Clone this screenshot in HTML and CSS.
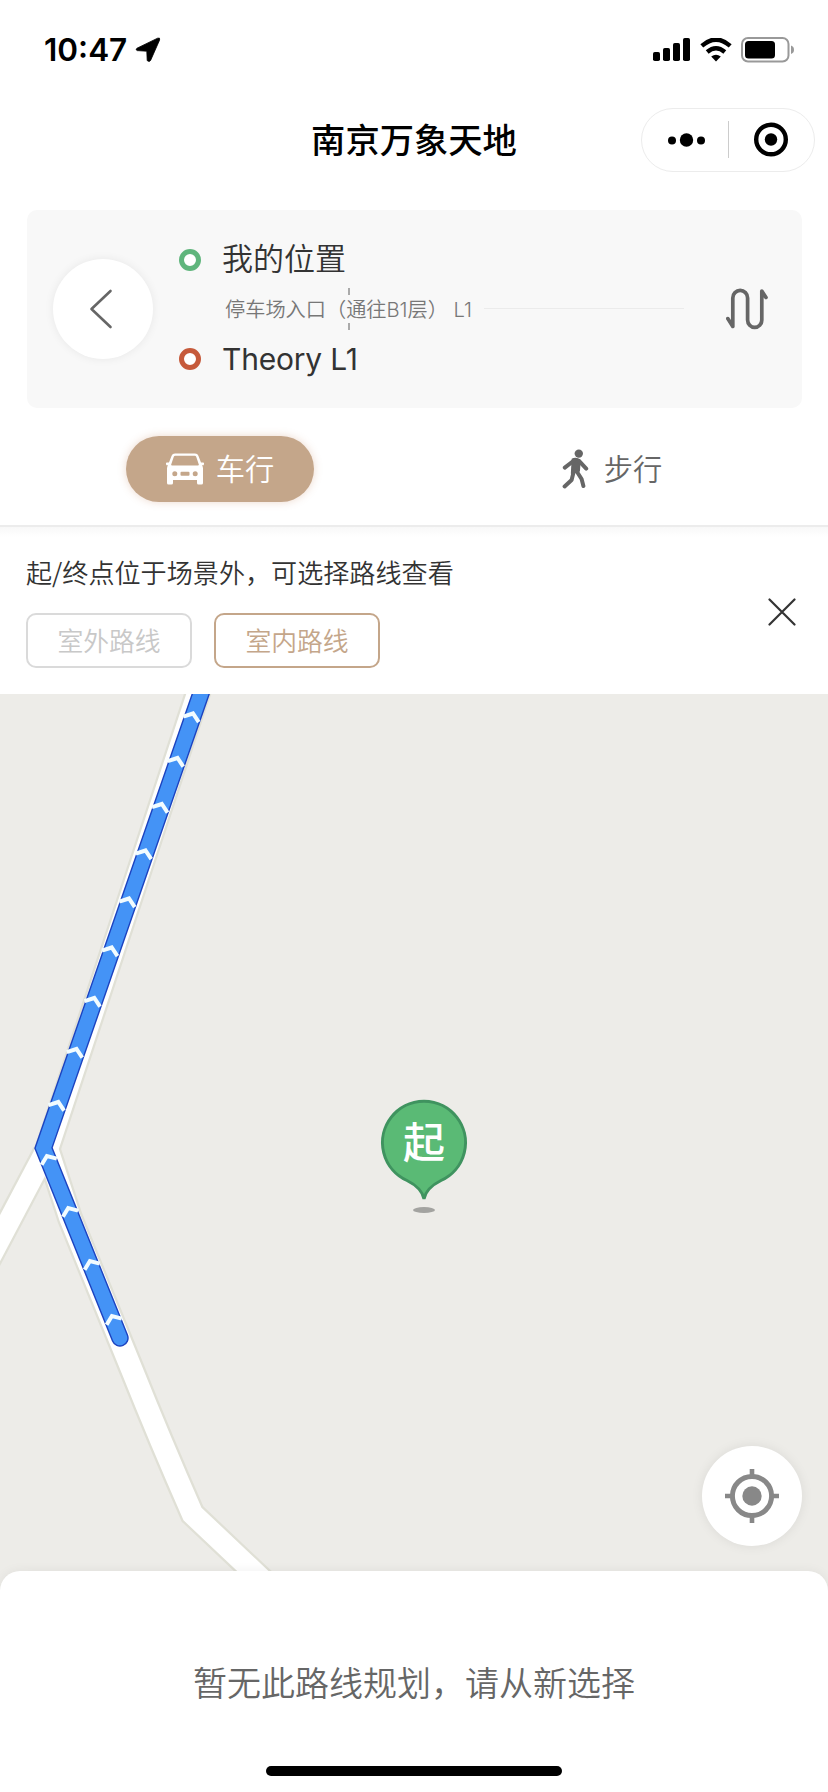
FILE: index.html
```html
<!DOCTYPE html>
<html lang="zh-CN">
<head>
    <meta charset="UTF-8">
    <meta name="viewport" content="width=device-width, initial-scale=1.0">
    <title>南京万象天地</title>
    <link rel="stylesheet" href="styles.css">
</head>
<body>
    <div class="page">
        <div class="status-bar">
            <div class="status-left">
                <span class="time">10:47</span>
                <svg class="location-arrow" width="26" height="26" viewBox="0 0 26 26">
                    <path d="M2 11.2 L22.6 1.2 Q25.4 0.2 24.6 3 L15.6 23.4 Q14.4 25.4 12.2 23.6 L11.8 14.2 L2.2 13.6 Q0 12.6 2 11.2Z" fill="#000" stroke="#000" stroke-width="0.8"/>
                </svg>
            </div>
            <div class="status-right">
                <svg width="38" height="24" viewBox="0 0 38 24">
                    <rect x="0" y="14" width="7" height="9" rx="1.8"/>
                    <rect x="10" y="10" width="7" height="13" rx="1.8"/>
                    <rect x="20" y="5" width="7" height="18" rx="1.8"/>
                    <rect x="30" y="0" width="7" height="23" rx="1.8"/>
                </svg>
                <svg width="32" height="24" viewBox="0 0 32 24">
                    <path d="M1.8 7.8 Q16 -4.6 30.2 7.8" fill="none" stroke="#000" stroke-width="4.4"/>
                    <path d="M7.2 14 Q16 6.6 24.8 14" fill="none" stroke="#000" stroke-width="4.4"/>
                    <path d="M11.2 18.6 Q16 15 20.8 18.6 L16 23.4Z"/>
                </svg>
                <svg class="battery" width="54" height="26" viewBox="0 0 54 26">
                    <rect x="1" y="1" width="46.5" height="23.5" rx="6" fill="none" stroke="#999" stroke-width="2"/>
                    <rect x="4" y="4" width="30" height="17.5" rx="3.5"/>
                    <path d="M50 8.6 Q53 9.6 53 12.8 Q53 16 50 17Z" fill="#999"/>
                </svg>
            </div>
        </div>

        <div class="nav-bar">
            <h1>南京万象天地</h1>
            <div class="capsule">
                <svg width="172" height="62" viewBox="0 0 172 62">
                    <circle cx="30" cy="31.5" r="4"/>
                    <circle cx="44.5" cy="31" r="6.7"/>
                    <circle cx="59" cy="31.5" r="4"/>
                    <path d="M86.5 12 V49" stroke="#ccc" stroke-width="1"/>
                    <circle cx="129" cy="30.5" r="14.8" fill="none" stroke="#000" stroke-width="4.4"/>
                    <circle cx="129" cy="30.5" r="6.2"/>
                </svg>
            </div>
        </div>

        <div class="route-card">
            <button class="back">
                <svg width="24" height="40" viewBox="0 0 24 40">
                    <path d="M21.5 2 L2.5 20 L21.5 38" fill="none" stroke="#666" stroke-width="2.6" stroke-linecap="round" stroke-linejoin="round"/>
                </svg>
            </button>
            <div class="stops">
                <div class="stop"><i class="dot start"></i><span>我的位置</span></div>
                <div class="via">
                    <span>停车场入口（通往B1层） L1</span>
                    <i class="via-line"></i>
                </div>
                <div class="stop"><i class="dot end"></i><span>Theory L1</span></div>
            </div>
            <svg class="swap" width="42" height="42" viewBox="0 0 42 42">
                <path d="M1.8 30.6 L6.8 38.4 V10 A7.4 7.6 0 0 1 21.6 10 V32 A7.1 7.4 0 0 0 35.8 32 V3 L40 9.4" fill="none" stroke="#666" stroke-width="3.7" stroke-linecap="round" stroke-linejoin="round"/>
            </svg>
        </div>

        <div class="modes">
            <button class="mode active">
                <svg width="38" height="32" viewBox="0 0 38 32">
                    <path fill="#fff" fill-rule="evenodd" d="M9 0.5 H29 Q31.6 0.5 32.4 2.8 L35 9.5 H37.2 Q38.4 9.8 38 11 L37.6 12.2 H36 Q37 13.6 37 15.5 V30 Q37 31.5 35.5 31.5 H32.5 Q31 31.5 31 30 V27 H7 V30 Q7 31.5 5.5 31.5 H2.5 Q1 31.5 1 30 V15.5 Q1 13.6 2 12.2 H0.4 L0 11 Q-0.4 9.8 0.8 9.5 H3 L5.6 2.8 Q6.4 0.5 9 0.5Z M9.2 2.8 Q8.2 2.8 7.8 3.8 L5.2 11.6 Q5 12.4 6 12.4 H32 Q33 12.4 32.8 11.6 L30.2 3.8 Q29.8 2.8 28.8 2.8Z"/>
                    <circle cx="8.8" cy="20.8" r="2.5" fill="#c4a68a"/>
                    <circle cx="29.2" cy="20.8" r="2.5" fill="#c4a68a"/>
                    <rect x="14.5" y="18.8" width="9" height="4" rx="1" fill="#c4a68a"/>
                </svg>
                <span>车行</span>
            </button>
            <button class="mode walk">
                <svg width="27" height="40" viewBox="0 0 27 40">
                    <circle cx="16.8" cy="4.6" r="4.2" fill="#666"/>
                    <path d="M10.4 10.2 Q13 8.8 16 10 L18 11.5 L17.2 22 L9.6 24.4Z" fill="#666" stroke="#666" stroke-width="1.5" stroke-linejoin="round"/>
                    <path d="M12 11.5 L2.8 18.6 M17 11.8 L24.2 19.6 M11.6 23 L9.6 31 L2.6 37.4 M14.8 22.5 L19.6 30 L21.4 37" fill="none" stroke="#666" stroke-width="4" stroke-linecap="round" stroke-linejoin="round"/>
                </svg>
                <span>步行</span>
            </button>
        </div>

        <div class="notice">
            <div class="notice-body">
                <p>起/终点位于场景外，可选择路线查看</p>
                <div class="options">
                    <button class="option">室外路线</button>
                    <button class="option selected">室内路线</button>
                </div>
            </div>
            <svg class="close" width="28" height="28" viewBox="0 0 28 28">
                <path d="M1.5 1.5 L26.5 26.5 M26.5 1.5 L1.5 26.5" stroke="#333" stroke-width="2.2" stroke-linecap="round"/>
            </svg>
        </div>

        <div class="map">
            <svg class="map-canvas" width="828" height="900" viewBox="0 694 828 900">
                <defs>
                    <path id="main-road" d="M204.5 673 L47.5 1149 L70 1218 L132 1370 Q160 1440 192.5 1514 L275 1592"/>
                    <path id="side-road" d="M45 1153 L-20 1276"/>
                    <path id="route" d="M208 673 L43.5 1148 L120 1338"/>
                    <path id="arrow" d="M-8.2 4.6 L0 -1.6 L8.2 4.6"/>
                </defs>
                <!-- roads: casing first, then the white surface -->
                <g fill="none" stroke="#e0e0d6" stroke-width="26">
                    <use href="#main-road"/>
                    <use href="#side-road"/>
                </g>
                <g fill="none" stroke="#fff" stroke-width="21.5">
                    <use href="#main-road"/>
                    <use href="#side-road"/>
                </g>
                <!-- route -->
                <g fill="none" stroke-linecap="round" stroke-linejoin="miter">
                    <use href="#route" stroke="#1c43c0" stroke-width="17.4"/>
                    <use href="#route" stroke="#4493f6" stroke-width="14.6"/>
                </g>
                <g fill="none" stroke="#f2fcff" stroke-width="4">
                    <use href="#arrow" transform="translate(192.5 715) rotate(19)"/>
                    <use href="#arrow" transform="translate(177 759.5) rotate(19)"/>
                    <use href="#arrow" transform="translate(161.3 805.5) rotate(19)"/>
                    <use href="#arrow" transform="translate(145 852) rotate(19)"/>
                    <use href="#arrow" transform="translate(128.5 900) rotate(19)"/>
                    <use href="#arrow" transform="translate(111.2 949) rotate(19)"/>
                    <use href="#arrow" transform="translate(93.8 999.5) rotate(19)"/>
                    <use href="#arrow" transform="translate(76 1050.5) rotate(19)"/>
                    <use href="#arrow" transform="translate(57.8 1103.5) rotate(19)"/>
                    <use href="#arrow" transform="translate(47.5 1157.5) rotate(-22)"/>
                    <use href="#arrow" transform="translate(68.8 1209.5) rotate(-22)"/>
                    <use href="#arrow" transform="translate(90.5 1262.5) rotate(-22)"/>
                    <use href="#arrow" transform="translate(112.5 1317.5) rotate(-22)"/>
                </g>
                <!-- start pin -->
                <ellipse cx="424" cy="1210" rx="11" ry="3" fill="#a3a3a0"/>
                <path d="M424 1199 Q422 1188 407 1180.5 A41.5 41.5 0 1 1 441 1180.5 Q426 1188 424 1199Z" fill="#5aba75" stroke="#3f935f" stroke-width="3"/>
                <text class="pin-label" x="424" y="1158" text-anchor="middle">起</text>
            </svg>
            <button class="locate">
                <svg width="54" height="54" viewBox="0 0 54 54">
                    <circle cx="27" cy="27" r="19.6" fill="none" stroke="#888" stroke-width="5"/>
                    <circle cx="27" cy="27" r="9.7" fill="#888"/>
                    <path d="M27 0 V6 M27 48 V54 M0 27 H6 M48 27 H54" stroke="#888" stroke-width="4.6"/>
                </svg>
            </button>
        </div>

        <div class="sheet">
            <p>暂无此路线规划，请从新选择</p>
            <div class="home-indicator"></div>
        </div>
    </div>
</body>
</html>
```
FILE: styles.css
```css
* {
    box-sizing: border-box;
}
body {
    margin: 0;
    background: #fff;
    font-family: Inter, "Noto Sans CJK SC", sans-serif;
    color: #333;
}
h1, p {
    margin: 0;
}
button {
    padding: 0;
    border: none;
    background: none;
    font-family: inherit;
    color: inherit;
}
svg {
    display: block;
    flex: none;
}
.page {
    width: 828px;
    height: 1792px;
    display: flex;
    flex-direction: column;
    overflow: hidden;
}
.status-bar {
    height: 100px;
    padding: 0 33px 0 44px;
    display: flex;
    justify-content: space-between;
    align-items: center;
}
.status-left, .status-right {
    display: flex;
    align-items: center;
    color: #000;
}
.status-left {
    gap: 8px;
}
.status-right {
    gap: 9px;
}
.time {
    font-size: 31.5px;
    font-weight: 600;
    line-height: 40px;
}
.nav-bar {
    position: relative;
    height: 80px;
    display: flex;
    justify-content: center;
    align-items: center;
    padding-top: 2px;
}
h1 {
    font-size: 34.3px;
    font-weight: 500;
    line-height: 50px;
    color: #000;
}
.capsule {
    position: absolute;
    right: 13px;
    top: 8px;
    width: 174px;
    height: 64px;
    border: 1px solid #ececec;
    border-radius: 32px;
}
.route-card {
    height: 198px;
    margin: 30px 26px 0 27px;
    padding: 0 34px 0 26px;
    display: flex;
    align-items: center;
    background: #f8f8f8;
    border-radius: 10px;
}
.back {
    width: 100px;
    height: 100px;
    flex: none;
    display: flex;
    justify-content: center;
    align-items: center;
    padding-right: 4px;
    border-radius: 50%;
    background: #fff;
    box-shadow: 0 0 10px rgba(0, 0, 0, 0.07);
}
.stops {
    flex: 1;
    margin-left: 26px;
}
.stop {
    display: flex;
    align-items: center;
    height: 50px;
    font-size: 31px;
    font-weight: 350;
}
.stop span {
    line-height: 44px;
    margin-bottom: 1px;
}
.stop:last-child {
    font-size: 30px;
    font-weight: 400;
}
.stop:last-child span {
    margin-bottom: 0;
    letter-spacing: -0.2px;
}
.dot {
    width: 22px;
    height: 22px;
    margin-right: 21px;
    border: 5px solid #5fb57c;
    border-radius: 50%;
    background: #fff;
}
.dot.end {
    border-color: #c65a3b;
}
.via {
    position: relative;
    height: 49px;
    padding: 0 0 2px 46px;
    display: flex;
    align-items: center;
    gap: 12px;
    font-size: 20.2px;
    font-weight: 350;
    color: #777;
    white-space: nowrap;
}
/* dashed connector behind the via text */
.via::before, .via::after {
    content: "";
    position: absolute;
    left: 169px;
    width: 2px;
    height: 7px;
    background: #aaa;
}
.via::before {
    top: 3px;
}
.via::after {
    bottom: 4px;
}
.via-line {
    width: 200px;
    height: 1px;
    background: #ebebeb;
}
.modes {
    height: 119px;
    display: grid;
    grid-template-columns: 440px 1fr;
    justify-items: center;
    padding-top: 28px;
    border-bottom: 2px solid #ececec;
}
.mode {
    display: flex;
    justify-content: center;
    align-items: center;
    gap: 12px;
    width: 188px;
    height: 66px;
    border-radius: 33px;
    font-size: 29.3px;
    font-weight: 350;
    color: #666;
}
.mode span {
    padding-bottom: 4px;
}
.mode.active {
    background: #c4a68a;
    color: #fff;
    box-shadow: 0 0 8px rgba(196, 130, 90, 0.3);
}
.mode.walk {
    gap: 15px;
    padding-right: 44px;
}
.notice {
    height: 167px;
    padding: 26px 32px 0 26px;
    display: flex;
    justify-content: space-between;
    background: linear-gradient(#f8f8f8, #fff 10px);
}
.notice p {
    font-family: "Noto Sans CJK SC", sans-serif;
    font-size: 26.1px;
    font-weight: 350;
    line-height: 38px;
}
.options {
    display: flex;
    gap: 22px;
    margin-top: 22px;
}
.option {
    width: 166px;
    height: 55px;
    padding-bottom: 2px;
    border: 2px solid #dadada;
    border-radius: 10px;
    font-size: 25.8px;
    font-weight: 350;
    color: #c8c8c8;
}
.option.selected {
    border-color: #c4a68a;
    color: #c4a68a;
}
.close {
    margin-top: 45px;
}
.map {
    position: relative;
    flex: none;
    height: 898px;
    overflow: hidden;
    background: #edece8;
}
.pin-label {
    font-size: 42px;
    font-weight: 500;
    fill: #fff;
}
.locate {
    position: absolute;
    right: 26px;
    bottom: 46px;
    width: 100px;
    height: 100px;
    display: flex;
    justify-content: center;
    align-items: center;
    border-radius: 50%;
    background: #fff;
    box-shadow: 0 0 12px rgba(0, 0, 0, 0.08);
}
/* overlaps the bottom of the map so the corners sit on it */
.sheet {
    position: relative;
    flex: 1;
    display: flex;
    flex-direction: column;
    align-items: center;
    justify-content: space-between;
    margin-top: -21px;
    padding: 88px 0 16px;
    border-radius: 20px 20px 0 0;
    background: #fff;
    box-shadow: 0 0 12px rgba(0, 0, 0, 0.06);
}
.sheet p {
    font-size: 34px;
    font-weight: 350;
    line-height: 50px;
    color: #666;
}
.home-indicator {
    width: 296px;
    height: 10px;
    border-radius: 5px;
    background: #000;
}
```
